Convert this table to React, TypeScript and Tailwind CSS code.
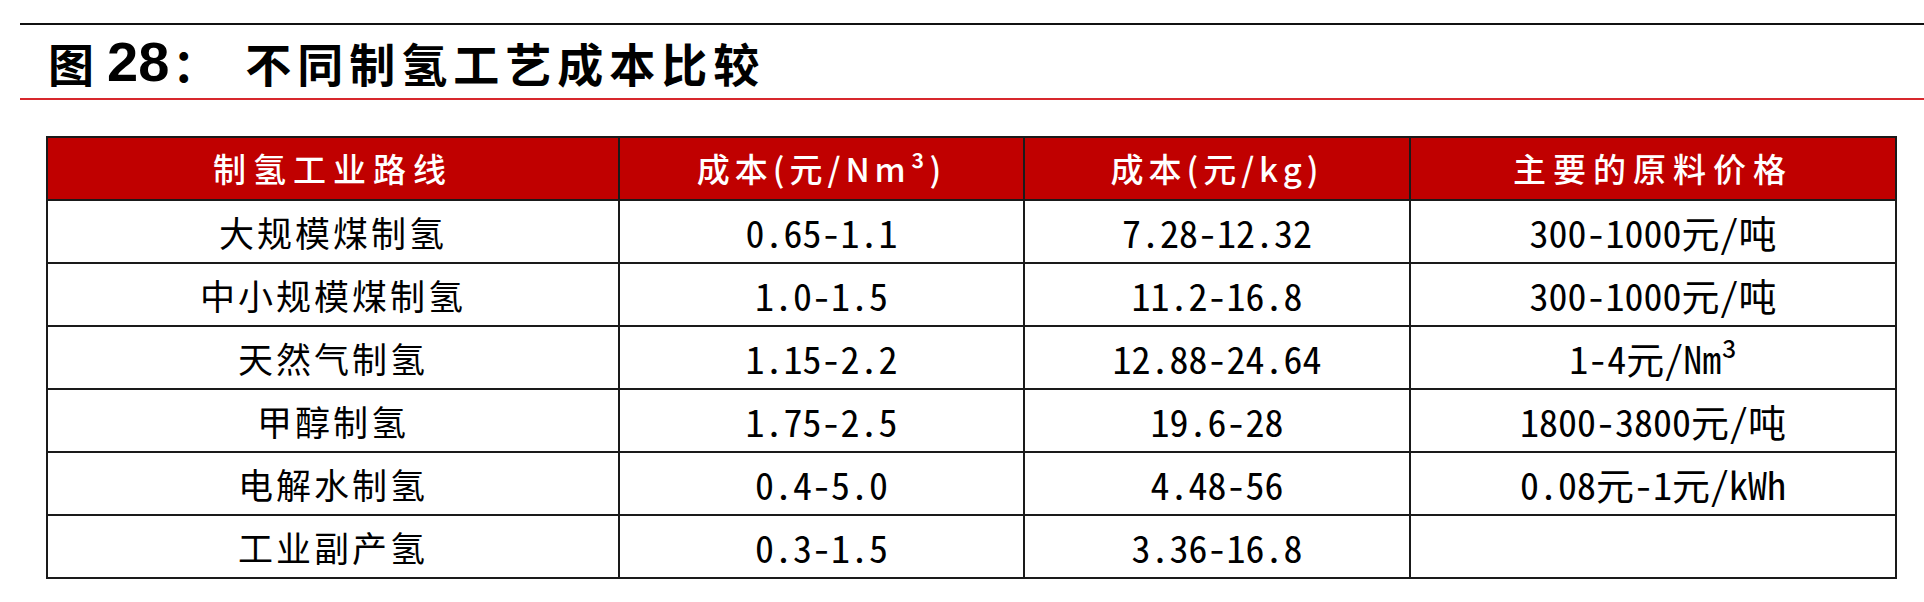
const heads = [
    { t: '制氢工业路线', cjk: true },
    { t: '成本(元/Nm³)', cjk: false },
    { t: '成本(元/kg)', cjk: false },
    { t: '主要的原料价格', cjk: true },
];

const rows = [
    ['大规模煤制氢', '0.65-1.1', '7.28-12.32', '300-1000元/吨'],
    ['中小规模煤制氢', '1.0-1.5', '11.2-16.8', '300-1000元/吨'],
    ['天然气制氢', '1.15-2.2', '12.88-24.64', '1-4元/Nm³'],
    ['甲醇制氢', '1.75-2.5', '19.6-28', '1800-3800元/吨'],
    ['电解水制氢', '0.4-5.0', '4.48-56', '0.08元-1元/kWh'],
    ['工业副产氢', '0.3-1.5', '3.36-16.8', ''],
];

export default function App() {
    return (
        <div className="w-[1924px] h-[602px] bg-white pl-[20px] pt-[23px] overflow-hidden">
            {/* title block */}
            <div className="h-[2px] bg-[#111]"></div>
            <div className="h-[73px] flex items-center pl-[28px] text-black">
                <span className="font-['Noto_Sans_CJK_SC',sans-serif] font-bold text-[46px] leading-none">图</span>
                <span className="ml-[13px] font-['Liberation_Sans',sans-serif] font-bold text-[56px] leading-none">28</span>
                <span className="ml-[3px] font-['Noto_Sans_CJK_SC',sans-serif] font-bold text-[46px] leading-none">：</span>
                <span className="ml-[27px] font-['Noto_Sans_CJK_SC',sans-serif] font-bold text-[46px] leading-none tracking-[6px]">不同制氢工艺成本比较</span>
            </div>
            <div className="h-[2px] bg-[#d7282d]"></div>

            {/* table */}
            <table className="mt-[36px] ml-[26px] table-fixed border-collapse">
                <colgroup>
                    <col className="w-[572px]" />
                    <col className="w-[405px]" />
                    <col className="w-[386px]" />
                    <col className="w-[486px]" />
                </colgroup>
                <thead>
                    <tr className="h-[63px] bg-[#c00000]">
                        {heads.map((h) => (
                            <th
                                key={h.t}
                                className={
                                    h.cjk
                                        ? "border-2 border-[#1a1a1a] text-center align-middle text-white font-['Noto_Sans_CJK_SC',sans-serif] font-medium text-[33px] leading-none tracking-[7px]"
                                        : "border-2 border-[#1a1a1a] text-center align-middle text-white font-['Noto_Sans_CJK_SC',sans-serif] font-medium text-[33px] leading-none tracking-[5px]"
                                }
                            >
                                {h.t}
                            </th>
                        ))}
                    </tr>
                </thead>
                <tbody>
                    {rows.map((r, i) => (
                        <tr key={i} className="h-[63px]">
                            <td className="border-2 border-[#1a1a1a] text-center align-middle text-black font-['Noto_Sans_CJK_SC',sans-serif] text-[35px] leading-none tracking-[3px]">
                                {r[0]}
                            </td>
                            {r.slice(1).map((v, j) => (
                                <td key={j} className="border-2 border-[#1a1a1a] text-center align-middle text-black font-['Noto_Sans_Mono_CJK_SC','Noto_Sans_CJK_SC',monospace] text-[38px] leading-none">
                                    {v}
                                </td>
                            ))}
                        </tr>
                    ))}
                </tbody>
            </table>
        </div>
    );
}
